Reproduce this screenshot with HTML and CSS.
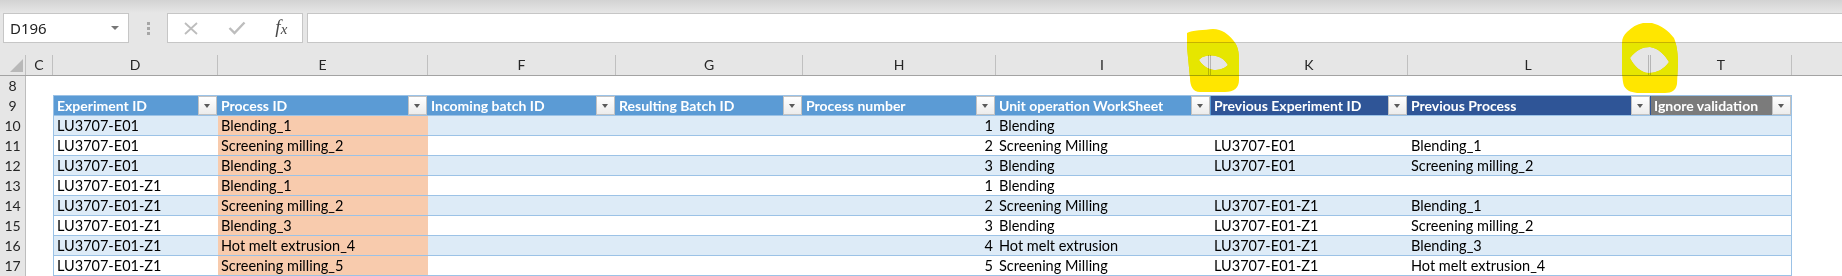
FILE: index.html
```html
<!DOCTYPE html>
<html lang="en">
<head>
    <meta charset="UTF-8">
    <title>Process sheet</title>
    <link rel="stylesheet" href="styles.css">
</head>
<body>
    <div class="app">
        <div class="ribbon-edge"></div>

        <div class="formula-bar">
            <div class="name-box"><span>D196</span><span class="caret"></span></div>
            <div class="grip"><i></i><i></i><i></i></div>
            <div class="fx-buttons">
                <svg width="16" height="13" viewBox="0 0 16 13"><path d="M2 1 L14 12 M14 1 L2 12" stroke="#bdbdbd" stroke-width="1.8" fill="none"/></svg>
                <svg width="18" height="14" viewBox="0 0 18 14"><path d="M1.5 7 L6.5 12 L16.5 1.5" stroke="#bdbdbd" stroke-width="2.4" fill="none"/></svg>
                <span class="fx">f<span class="fx-x">x</span></span>
            </div>
            <div class="formula-input"></div>
        </div>

        <div class="col-heads">
            <div class="ch corner"><span class="tri"></span></div>
            <div class="ch">C</div>
            <div class="ch">D</div>
            <div class="ch">E</div>
            <div class="ch">F</div>
            <div class="ch">G</div>
            <div class="ch">H</div>
            <div class="ch hidden-after">I</div>
            <div class="ch">K</div>
            <div class="ch hidden-after">L</div>
            <div class="ch">T</div>
            <div class="ch end"></div>
        </div>

        <div class="sheet">
            <div class="row first-row">
                <div class="rh">8</div>
            </div>

            <div class="row">
                <div class="rh">9</div><div class="c"></div>
                <div class="t th blue left"><span class="label">Experiment ID</span><span class="filter"></span></div>
                <div class="t th blue"><span class="label">Process ID</span><span class="filter"></span></div>
                <div class="t th blue"><span class="label">Incoming batch ID</span><span class="filter"></span></div>
                <div class="t th blue"><span class="label">Resulting Batch ID</span><span class="filter"></span></div>
                <div class="t th blue"><span class="label">Process number</span><span class="filter"></span></div>
                <div class="t th blue"><span class="label">Unit operation WorkSheet</span><span class="filter"></span></div>
                <div class="t th navy"><span class="label">Previous Experiment ID</span><span class="filter"></span></div>
                <div class="t th navy"><span class="label">Previous Process</span><span class="filter"></span></div>
                <div class="t th grey right"><span class="label">Ignore validation</span><span class="filter"></span></div>
                <div class="c"></div>
            </div>

            <div class="row band">
                <div class="rh">10</div><div class="c"></div>
                <div class="t left">LU3707-E01</div>
                <div class="t pid">Blending_1</div>
                <div class="t"></div><div class="t"></div>
                <div class="t num">1</div>
                <div class="t">Blending</div>
                <div class="t"></div>
                <div class="t"></div>
                <div class="t right"></div>
                <div class="c"></div>
            </div>

            <div class="row">
                <div class="rh">11</div><div class="c"></div>
                <div class="t left">LU3707-E01</div>
                <div class="t pid">Screening milling_2</div>
                <div class="t"></div><div class="t"></div>
                <div class="t num">2</div>
                <div class="t">Screening Milling</div>
                <div class="t">LU3707-E01</div>
                <div class="t">Blending_1</div>
                <div class="t right"></div>
                <div class="c"></div>
            </div>

            <div class="row band">
                <div class="rh">12</div><div class="c"></div>
                <div class="t left">LU3707-E01</div>
                <div class="t pid">Blending_3</div>
                <div class="t"></div><div class="t"></div>
                <div class="t num">3</div>
                <div class="t">Blending</div>
                <div class="t">LU3707-E01</div>
                <div class="t">Screening milling_2</div>
                <div class="t right"></div>
                <div class="c"></div>
            </div>

            <div class="row">
                <div class="rh">13</div><div class="c"></div>
                <div class="t left">LU3707-E01-Z1</div>
                <div class="t pid">Blending_1</div>
                <div class="t"></div><div class="t"></div>
                <div class="t num">1</div>
                <div class="t">Blending</div>
                <div class="t"></div>
                <div class="t"></div>
                <div class="t right"></div>
                <div class="c"></div>
            </div>

            <div class="row band">
                <div class="rh">14</div><div class="c"></div>
                <div class="t left">LU3707-E01-Z1</div>
                <div class="t pid">Screening milling_2</div>
                <div class="t"></div><div class="t"></div>
                <div class="t num">2</div>
                <div class="t">Screening Milling</div>
                <div class="t">LU3707-E01-Z1</div>
                <div class="t">Blending_1</div>
                <div class="t right"></div>
                <div class="c"></div>
            </div>

            <div class="row">
                <div class="rh">15</div><div class="c"></div>
                <div class="t left">LU3707-E01-Z1</div>
                <div class="t pid">Blending_3</div>
                <div class="t"></div><div class="t"></div>
                <div class="t num">3</div>
                <div class="t">Blending</div>
                <div class="t">LU3707-E01-Z1</div>
                <div class="t">Screening milling_2</div>
                <div class="t right"></div>
                <div class="c"></div>
            </div>

            <div class="row band">
                <div class="rh">16</div><div class="c"></div>
                <div class="t left">LU3707-E01-Z1</div>
                <div class="t pid">Hot melt extrusion_4</div>
                <div class="t"></div><div class="t"></div>
                <div class="t num">4</div>
                <div class="t">Hot melt extrusion</div>
                <div class="t">LU3707-E01-Z1</div>
                <div class="t">Blending_3</div>
                <div class="t right"></div>
                <div class="c"></div>
            </div>

            <div class="row last-row">
                <div class="rh">17</div><div class="c"></div>
                <div class="t left">LU3707-E01-Z1</div>
                <div class="t pid">Screening milling_5</div>
                <div class="t"></div><div class="t"></div>
                <div class="t num">5</div>
                <div class="t">Screening Milling</div>
                <div class="t">LU3707-E01-Z1</div>
                <div class="t">Hot melt extrusion_4</div>
                <div class="t right"></div>
                <div class="c"></div>
            </div>
        </div>

        <!-- highlighter marks drawn over the screenshot -->
        <svg class="marks" width="1842" height="276" viewBox="0 0 1842 276">
            <defs>
                <clipPath id="mark1">
                    <path clip-rule="evenodd" d="M1187,33 C1192,30 1205,30 1213,29 C1222,29 1228,34 1233,40 C1238,46 1239,52 1239,60 L1239,80 C1239,88 1234,92 1225,92 L1200,92 C1193,92 1190,86 1190,78 L1187,47 Z M1199,60 C1202,56 1210,54 1219,57 C1224,59 1226,62 1228,65 C1224,69 1219,70 1214,70 C1207,69 1202,65 1199,60 Z"/>
                </clipPath>
                <clipPath id="mark2">
                    <path clip-rule="evenodd" d="M1627,32 C1632,27 1637,24 1643,23 L1652,23 C1660,25 1668,30 1674,38 C1677,45 1678,55 1678,63 L1677,84 C1676,90 1672,93 1665,93 L1640,93 C1632,93 1627,91 1624,86 C1622,80 1622,70 1622,60 L1622,43 C1622,38 1624,35 1627,32 Z M1630,58 C1636,50 1643,47 1650,47 C1658,48 1665,55 1669,62 C1664,69 1657,73 1649,73 C1641,73 1634,66 1630,58 Z"/>
                </clipPath>
            </defs>
            <g clip-path="url(#mark1)">
                <rect x="1180" y="20" width="70" height="80" fill="#ffe600"/>
                <rect x="1180" y="43" width="70" height="33" fill="#ffff00"/>
            </g>
            <g clip-path="url(#mark2)">
                <rect x="1615" y="20" width="70" height="80" fill="#ffe600"/>
                <rect x="1615" y="43" width="70" height="33" fill="#ffff00"/>
            </g>
        </svg>
    </div>
</body>
</html>
```

FILE: styles.css
```css
body {
    margin: 0;
    background: #fff;
    font-family: 'Lato', 'Liberation Sans', sans-serif;
    color: #000;
    overflow: hidden;
}

.app {
    --cols: 26px 27px 165px 210px 188px 187px 193px 215px 197px 243px 141px 1fr;
    position: relative;
    width: 1842px;
    height: 276px;
    overflow: hidden;
}

.ribbon-edge {
    height: 13px;
    background: linear-gradient(#d3d3d3, #e6e6e6);
}

/* formula bar */
.formula-bar {
    display: flex;
    height: 30px;
    background: #e6e6e6;
}

.name-box {
    box-sizing: border-box;
    width: 126px;
    margin-left: 3px;
    display: flex;
    align-items: center;
    justify-content: space-between;
    padding: 0 9px 0 6px;
    background: #fff;
    border: 1px solid #c6c6c6;
    font-family: 'Noto Sans', sans-serif;
    font-size: 15px;
    color: #222;
}

.caret {
    width: 0;
    height: 0;
    border-left: 4px solid transparent;
    border-right: 4px solid transparent;
    border-top: 4px solid #777;
}

.grip {
    width: 38px;
    display: flex;
    flex-direction: column;
    align-items: center;
    justify-content: center;
    gap: 2px;
}

.grip i {
    display: block;
    width: 3px;
    height: 3px;
    background: #a6a6a6;
}

.fx-buttons {
    box-sizing: border-box;
    width: 136px;
    display: flex;
    align-items: center;
    justify-content: space-around;
    background: #fff;
    border: 1px solid #c6c6c6;
}

.fx {
    font-family: 'Liberation Serif', serif;
    font-style: italic;
    font-size: 19px;
    color: #4a4a4a;
    margin-top: -3px;
}

.fx-x {
    font-size: 15px;
    position: relative;
    top: 1px;
}

.formula-input {
    flex: 1;
    margin-left: 4px;
    background: #fff;
    border: 1px solid #c6c6c6;
    border-right: none;
}

/* column letters */
.col-heads {
    display: grid;
    grid-template-columns: var(--cols);
    background: #e6e6e6;
    padding-top: 12px;
    border-bottom: 1px solid #a3a3a3;
}

.ch {
    height: 20px;
    line-height: 20px;
    text-align: center;
    font-size: 14px;
    color: #262626;
    border-right: 1px solid #c0c0c0;
    box-sizing: border-box;
}

.ch.hidden-after {
    border-right: 3px double #b5b5b5;
}

.ch.end {
    border-right: none;
}

.corner {
    position: relative;
}

.tri {
    position: absolute;
    left: 10px;
    top: 4px;
    width: 13px;
    height: 13px;
    background: #b8b8b8;
    clip-path: polygon(100% 0, 100% 100%, 0 100%);
}

/* grid rows */
.row {
    display: grid;
    grid-template-columns: var(--cols);
    height: 20px;
    font-size: 14.5px;
    line-height: 19px;
}

.row.first-row {
    height: 19px;
}

.row.last-row {
    height: 21px;
}

.rh {
    box-sizing: border-box;
    background: #e6e6e6;
    border-right: 1px solid #bdbdbd;
    text-align: center;
    color: #262626;
    font-size: 14px;
    line-height: 19px;
    padding-top: 1px;
}

.first-row .rh {
    padding-top: 0;
}

.t {
    box-sizing: border-box;
    border-top: 1px solid #9bc2e6;
    padding-left: 3px;
    white-space: nowrap;
    overflow: hidden;
}

.last-row .t {
    border-bottom: 1px solid #9bc2e6;
}

.t.left {
    border-left: 1px solid #9bc2e6;
}

.t.right {
    border-right: 1px solid #9bc2e6;
}

.band .t {
    background: #ddebf7;
}

.row .pid {
    background: #f8cbad;
}

.t.num {
    text-align: right;
    padding-right: 3px;
}

/* table header */
.th {
    display: flex;
    justify-content: space-between;
    color: #fff;
    font-weight: bold;
    font-size: 14px;
}

.th .label {
    overflow: hidden;
}

.th.blue {
    background: #5b9bd5;
}

.th.navy {
    background: #2f5597;
}

.th.grey {
    background: #7b7b7b;
}

.filter {
    flex: none;
    box-sizing: border-box;
    width: 19px;
    height: 19px;
    margin-right: 1px;
    background: linear-gradient(#ffffff, #ececec);
    border: 1px solid #c2c2c2;
    position: relative;
}

.filter::after {
    content: '';
    position: absolute;
    left: 5px;
    top: 7px;
    border-left: 3.5px solid transparent;
    border-right: 3.5px solid transparent;
    border-top: 4px solid #5a5a5a;
}

.th.right .filter {
    margin-right: 0;
}

.marks {
    position: absolute;
    left: 0;
    top: 0;
    pointer-events: none;
    mix-blend-mode: multiply;
}
```
